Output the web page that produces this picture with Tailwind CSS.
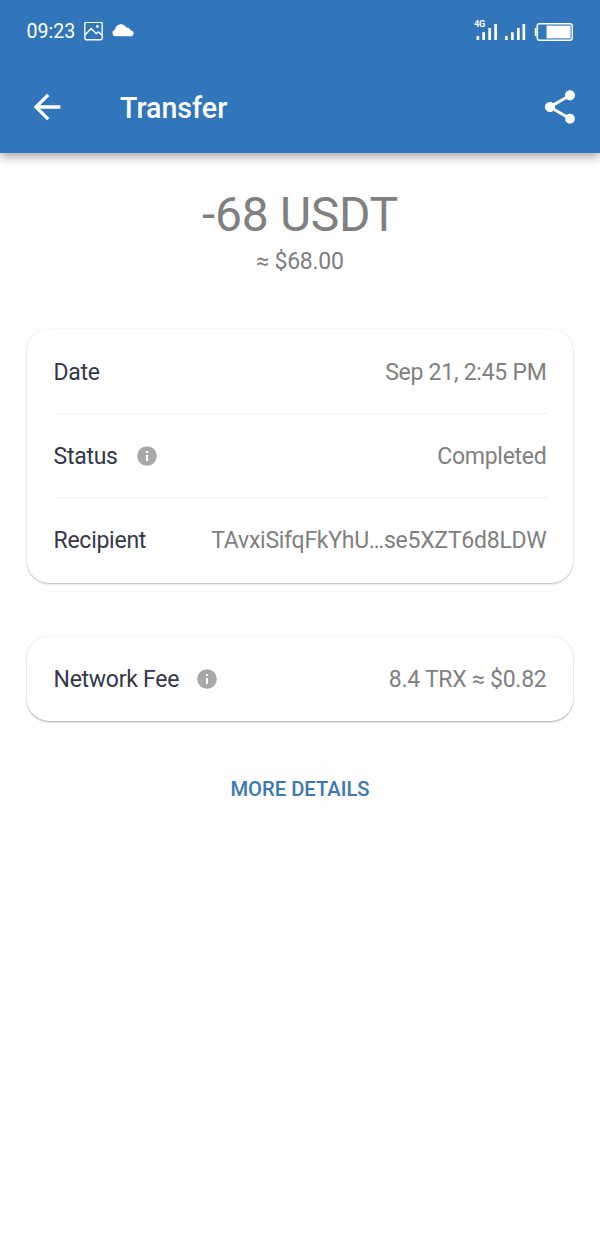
<!DOCTYPE html>
<html lang="en"><head><meta charset="utf-8"><title>Transfer</title>
<script src="https://cdn.jsdelivr.net/npm/@tailwindcss/browser@4"></script></head>
<body class="bg-[#fefefe] font-['Roboto',sans-serif] h-[1250px] overflow-hidden text-[23px] tracking-[-0.26px] text-[#808080]">
<header class="h-[153px] bg-[#3175bb] text-white shadow-[0_3px_10px_rgba(0,0,0,0.38)]">
<div class="h-[62px] flex items-center pl-[26.5px] pr-[27px]">
<span class="text-[19.6px] leading-none w-[57px] pt-[1.5px] tracking-normal">09:23</span>
<svg class="w-[19px] h-[19px]" viewBox="0 0 19 19" fill="none" stroke="currentColor" stroke-width="1.4"><rect x=".8" y=".3" width="17.4" height="17.4" rx="1.6"/><path d="M1.2 12.7L7.2 6.500l5 5.200 2.200-1.800 3.600 3.400" stroke-linejoin="round"/><circle cx="13.400" cy="4.500" r="1.400" fill="currentColor" stroke="none"/></svg>
<svg class="w-[22px] h-[13px] ml-[9.5px] -mt-[1px]" viewBox="0 0 22 13" fill="currentColor"><path d="M3.6 12.3A3.3 3.3 0 0 1 3 5.8C3.4 2.500 6 .3 9 .3c2.500 0 4.300 1.300 5.300 3.300 2.200-.2 3.700.9 4.200 2.700 1.900.3 3.100 1.500 3.100 3.100 0 1.700-1.300 2.900-3.200 2.900z"/></svg>
<svg class="ml-auto w-[99px] h-6" viewBox="0 0 99 24" fill="currentColor"><path d="M2.500 17h2.700v4H2.500zM8.300 13.300H11V21H8.300zM14.300 9H17v12h-2.700zM20.300 5H23v16h-2.700zM31 17h2.700v4H31zM37 13.300h2.700V21H37zM43 9h2.700v12H43zM48.500 5h2.700v16h-2.700z"/><path d="M62.500 9H60.800v8h1.700z"/><rect x="63.300" y="4.800" width="35" height="16.400" rx="2.200" fill="none" stroke="currentColor" stroke-width="1.500"/><path d="M72.500 6.600H96.500v12.800H72.500z"/><text x="0" y="8" font-size="9" font-weight="700" textLength="11" lengthAdjust="spacingAndGlyphs">4G</text></svg>
</div>
<div class="h-[90px] flex items-center pl-[26.5px] pr-5">
<svg class="w-10 h-10" viewBox="0 0 24 24" fill="currentColor"><path d="M20 11H7.830l5.590-5.590L12 4l-8 8 8 8 1.410-1.410L7.830 13H20z"/></svg>
<span class="text-[28.6px] font-medium ml-[53.5px] pt-[2px] leading-none tracking-normal">Transfer</span>
<svg class="ml-auto w-10 h-10" viewBox="0 0 24 24" fill="currentColor"><path d="M18 16.080c-.76 0-1.440.3-1.960.77L8.910 12.700c.05-.23.09-.46.09-.7s-.04-.47-.09-.7l7.050-4.110c.54.5 1.250.81 2.040.81 1.660 0 3-1.340 3-3s-1.340-3-3-3-3 1.340-3 3c0 .24.04.47.09.7L8.040 9.810C7.500 9.310 6.790 9 6 9c-1.660 0-3 1.340-3 3s1.340 3 3 3c.79 0 1.500-.31 2.040-.81l7.120 4.160c-.05.21-.08.43-.08.65 0 1.610 1.310 2.920 2.920 2.920s2.920-1.310 2.920-2.920-1.310-2.920-2.920-2.920z"/></svg>
</div>
</header>
<main class="px-[27px]">
<h1 class="mt-[34px] text-center text-[48px] leading-[56px] tracking-[-0.3px]">-68 USDT</h1>
<p class="mt-[5px] text-center leading-[27px]">≈ $68.00</p>
<section class="mt-[54px] h-[254px] rounded-[22px] bg-white px-[26.5px] shadow-[0_1px_2px_rgba(0,0,0,0.25),0_0_1px_rgba(0,0,0,0.08)]">
<div class="h-[85px] pt-[4px] flex items-center justify-between border-b border-[#f0f0f0]"><span class="text-[#34374a]">Date</span><span>Sep 21, 2:45 PM</span></div>
<div class="h-[84px] pt-[4px] flex items-center justify-between border-b border-[#f0f0f0]"><span class="flex items-center text-[#34374a]">Status<svg class="ml-[19px] -mt-[4px] w-5 h-5" viewBox="0 0 20 20"><circle cx="10" cy="10" r="9.800" fill="#a8a8a8"/><path d="M9 5h2v2H9zM9 9h2v6H9z" fill="#fff"/></svg></span><span>Completed</span></div>
<div class="h-[84px] pt-[3px] flex items-center justify-between"><span class="text-[#34374a]">Recipient</span><span>TAvxiSifqFkYhU…se5XZT6d8LDW</span></div>
</section>
<section class="mt-[53px] h-[85px] pt-[4px] rounded-[22px] bg-white px-[26.5px] flex items-center justify-between shadow-[0_1px_2px_rgba(0,0,0,0.33),0_0_1px_rgba(0,0,0,0.08)]"><span class="flex items-center text-[#34374a]">Network Fee<svg class="ml-[18px] -mt-[4px] w-5 h-5" viewBox="0 0 20 20"><circle cx="10" cy="10" r="9.800" fill="#a8a8a8"/><path d="M9 5h2v2H9zM9 9h2v6H9z" fill="#fff"/></svg></span><span>8.4 TRX ≈ $0.82</span></section>
<p class="mt-[53px] text-center text-[20.2px] leading-[30px] font-medium tracking-normal text-[#3b78b5]">MORE DETAILS</p>
</main></body></html>
